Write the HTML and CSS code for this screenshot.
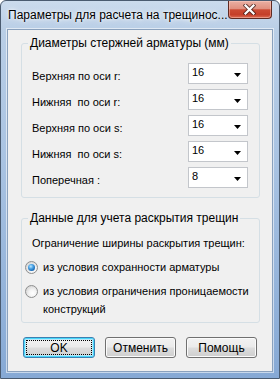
FILE: index.html
```html
<!DOCTYPE html>
<html>
<head>
<meta charset="utf-8">
<link rel="stylesheet" href="styles.css">
</head>
<body>
<div class="window">
  <div class="titlebar">
    <span class="title">Параметры для расчета на трещинос...</span>
    <div class="close">
      <svg width="13" height="11" viewBox="0 0 13 11">
        <path d="M2.5 1.5 L10.5 9.5 M10.5 1.5 L2.5 9.5" stroke="#3a1a16" stroke-width="4" stroke-linecap="square" fill="none" opacity="0.75"/>
        <path d="M2.5 1.5 L10.5 9.5 M10.5 1.5 L2.5 9.5" stroke="#ffffff" stroke-width="2.2" stroke-linecap="square" fill="none"/>
      </svg>
    </div>
  </div>
  <div class="client">
    <fieldset class="group g1">
      <legend>Диаметры стержней арматуры (мм)</legend>
      <div class="row"><span class="lbl">Верхняя по оси r:</span><div class="combo"><span class="val">16</span><svg class="arr" width="7" height="4" viewBox="0 0 7 4"><path d="M0 0 H7 L3.5 4 Z" fill="#000"/></svg></div></div>
      <div class="row"><span class="lbl">Нижняя&nbsp; по оси r:</span><div class="combo"><span class="val">16</span><svg class="arr" width="7" height="4" viewBox="0 0 7 4"><path d="M0 0 H7 L3.5 4 Z" fill="#000"/></svg></div></div>
      <div class="row"><span class="lbl">Верхняя по оси s:</span><div class="combo"><span class="val">16</span><svg class="arr" width="7" height="4" viewBox="0 0 7 4"><path d="M0 0 H7 L3.5 4 Z" fill="#000"/></svg></div></div>
      <div class="row"><span class="lbl">Нижняя&nbsp; по оси s:</span><div class="combo"><span class="val">16</span><svg class="arr" width="7" height="4" viewBox="0 0 7 4"><path d="M0 0 H7 L3.5 4 Z" fill="#000"/></svg></div></div>
      <div class="row"><span class="lbl">Поперечная :</span><div class="combo"><span class="val">8</span><svg class="arr" width="7" height="4" viewBox="0 0 7 4"><path d="M0 0 H7 L3.5 4 Z" fill="#000"/></svg></div></div>
    </fieldset>
    <fieldset class="group g2">
      <legend>Данные для учета раскрытия трещин</legend>
      <div class="note">Ограничение ширины раскрытия трещин:</div>
      <div class="opt"><span class="radio on"></span><span class="otext">из условия сохранности арматуры</span></div>
      <div class="opt"><span class="radio"></span><span class="otext">из условия ограничения проницаемости<br>конструкций</span></div>
    </fieldset>
    <div class="buttons">
      <div class="btn focus"><span>OK</span></div>
      <div class="btn"><span>Отменить</span></div>
      <div class="btn"><span>Помощь</span></div>
    </div>
  </div>
</div>
</body>
</html>
```

FILE: styles.css
```css
* { box-sizing: border-box; }
html, body { margin: 0; padding: 0; }
body {
  width: 280px;
  height: 379px;
  overflow: hidden;
  background: #ffffff;
  font-family: "Liberation Sans", Arial, sans-serif;
  color: #000;
}
.window {
  width: 280px;
  height: 379px;
  display: flex;
  flex-direction: column;
  border: 1px solid #4a5b70;
  border-radius: 6px 6px 0 0;
  background: linear-gradient(to bottom, #cbdbed 0px, #b9cee6 30px, #a9c3e2 160px, #86a9d5 100%);
}
.titlebar {
  height: 28px;
  display: flex;
  align-items: flex-start;
  padding-left: 7px;
}
.title {
  font-size: 12px;
  line-height: 14px;
  margin-top: 7px;
  white-space: nowrap;
  text-shadow: 0 0 6px #fff, 0 0 3px #fff;
}
.close {
  margin-left: auto;
  margin-right: 7px;
  width: 47px;
  height: 18px;
  border: 1px solid #5f2a22;
  border-top: none;
  border-radius: 0 0 4px 4px;
  background: linear-gradient(to bottom, #eab0a3 0%, #e0907f 45%, #cc4a33 52%, #c53f29 80%, #dc6a52 100%);
  box-shadow: inset 0 0 0 1px rgba(255, 210, 200, 0.45);
  display: flex;
  align-items: center;
  justify-content: center;
}
.client {
  flex: 1;
  margin: 0 6px 6px 6px;
  border: 1px solid #8aa1bd;
  box-shadow: 0 0 0 1px rgba(255, 255, 255, 0.55);
  background: #f0f0f0;
  padding-top: 6px;
}
.group {
  margin: 0 12px 0 13px;
  width: 239px;
  min-inline-size: 0;
  border: 1px solid #d5dfe5;
  border-radius: 3px;
  padding: 13px 11px 9px 10px;
}
.group legend {
  font-size: 12px;
  line-height: 14px;
  padding: 0 2px;
  margin-left: -4px;
  white-space: nowrap;
}
.row {
  display: flex;
  justify-content: space-between;
  height: 21px;
}
.row + .row { margin-top: 5px; }
.lbl {
  font-size: 11px;
  line-height: 14px;
  padding-top: 6px;
  white-space: nowrap;
}
.combo {
  width: 60px;
  height: 21px;
  border: 1px solid #c3c6cb;
  background: #fff;
  display: flex;
  justify-content: space-between;
  padding: 0 6px 0 3px;
}
.val {
  font-size: 11px;
  line-height: 17px;
}
.arr {
  align-self: center;
  margin-top: 2px;
}
.g2 {
  margin-top: 13px;
  padding: 9px 11px 4px 10px;
}
.note {
  font-size: 11px;
  line-height: 18px;
  white-space: nowrap;
}
.opt {
  display: flex;
  align-items: flex-start;
  margin-top: 6px;
  margin-left: -7px;
}
.otext {
  font-size: 11px;
  line-height: 18px;
  white-space: nowrap;
}
.radio {
  width: 13px;
  height: 13px;
  flex: none;
  margin-top: 3px;
  margin-right: 5px;
  border-radius: 50%;
  border: 1px solid #8e8f8f;
  background: radial-gradient(circle at 60% 65%, #ffffff 0%, #f4f4f4 35%, #d8d8d8 75%, #c8c8c8 100%);
  display: flex;
  align-items: center;
  justify-content: center;
}
.radio.on::after {
  content: "";
  width: 7px;
  height: 7px;
  border-radius: 50%;
  background: radial-gradient(circle at 40% 35%, #bfe8ff 0%, #4fa6e6 35%, #1463b0 75%, #0c4a86 100%);
}
.buttons {
  display: flex;
  gap: 10px;
  padding-left: 15px;
  margin-top: 14px;
}
.btn {
  width: 71px;
  height: 21px;
  border: 1px solid #707070;
  border-radius: 3px;
  background: linear-gradient(to bottom, #f2f2f2 0%, #ebebeb 48%, #dddddd 52%, #cfcfcf 100%);
  box-shadow: inset 0 0 0 1px #fbfbfb;
  display: flex;
  align-items: center;
  justify-content: center;
  font-size: 12px;
  line-height: 14px;
}
.btn.focus {
  width: 72px;
  border-color: #3c7fb1;
  box-shadow: inset 0 0 0 1px #48d8fb, inset 0 0 0 2px #b8e6f8;
  outline: 1px dotted #000;
  outline-offset: -4px;
}
```
